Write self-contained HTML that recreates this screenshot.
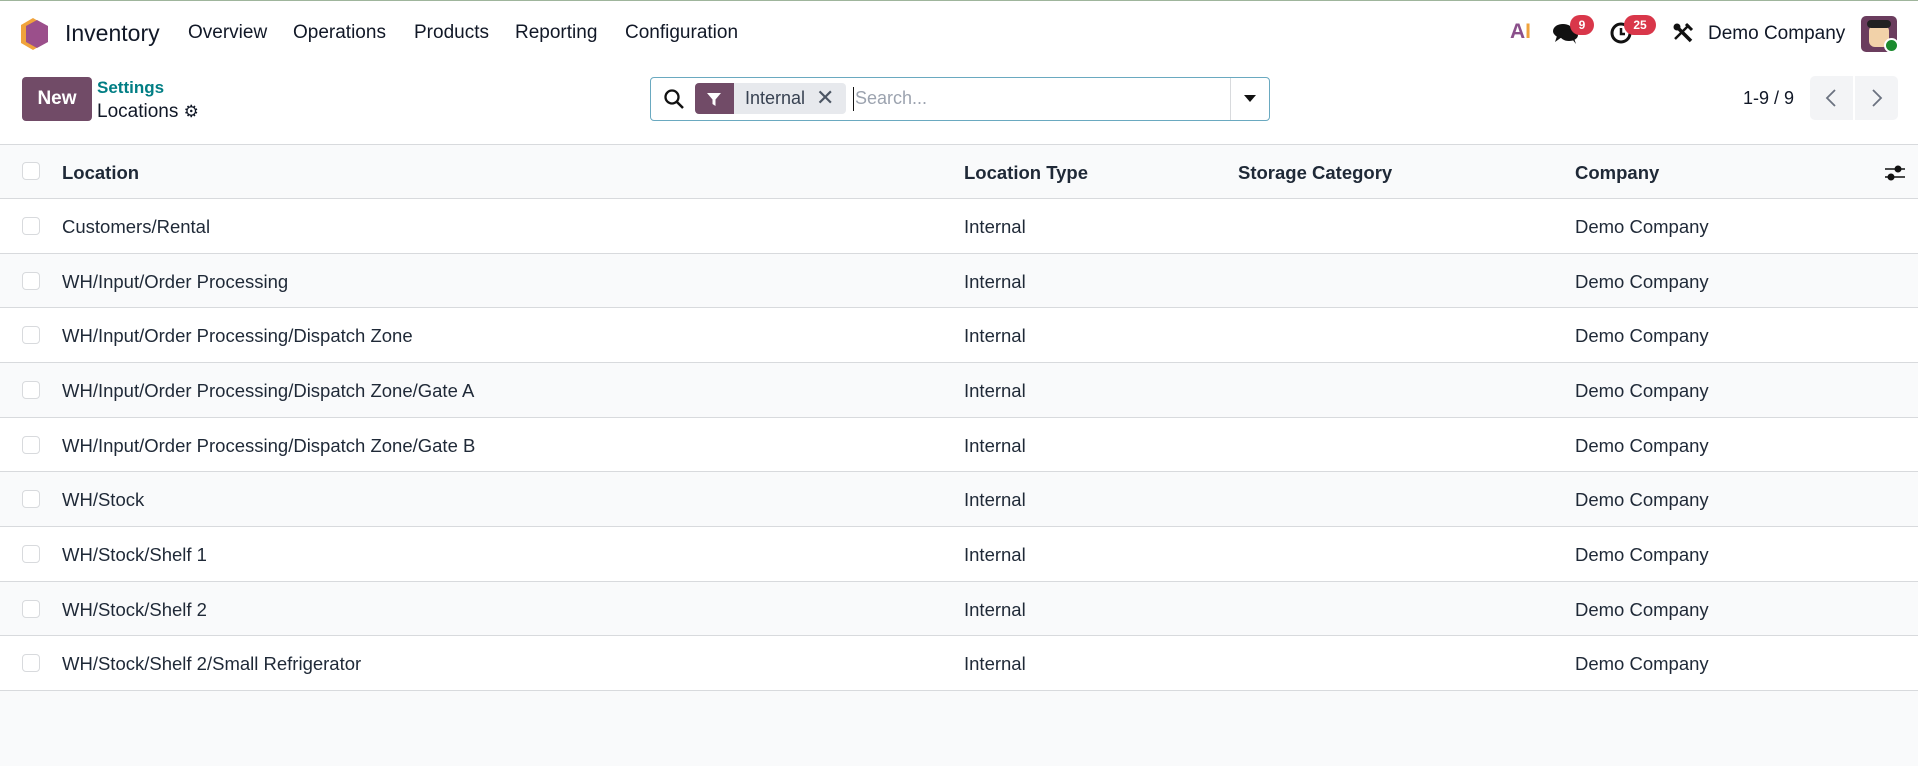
<!DOCTYPE html>
<html><head><meta charset="utf-8"><style>
*{box-sizing:border-box;margin:0;padding:0}
body{width:1918px;height:766px;background:#f9fafb;font-family:"Liberation Sans",sans-serif;color:#1f2937;position:relative;overflow:hidden}
.top{position:absolute;left:0;top:0;width:1918px;height:144px;background:#fff;border-top:1px solid #9fb59c}
.a{position:absolute;white-space:nowrap}
.nav{font-size:19px;top:21px;color:#111827}
.row{position:absolute;left:0;width:1918px;height:54.67px;border-bottom:1px solid #d8dadd;font-size:18.5px}
.row span{position:absolute;top:17px}
.cb{position:absolute;left:22px;top:18px;width:18px;height:18px;border:1px solid #d8dadd;border-radius:4px;background:#fff}
.badge{position:absolute;background:#d9374a;color:#fff;font-size:12px;font-weight:bold;border-radius:10px;height:20px;line-height:20px;text-align:center}
</style></head><body>
<div class="top">
<svg class="a" style="left:20px;top:16px" width="30" height="34" viewBox="0 0 30 34"><polygon points="13,1 25,8 25,26 13,33 1,26 1,8" fill="#f0a33c"/><polygon points="17,3 28,9 28,25 17,31 6,25 6,9" fill="#9b4f8b"/></svg>
<div class="a" style="left:65px;top:19px;font-size:23px;color:#111827">Inventory</div>
<div class="a nav" style="left:188px">Overview</div>
<div class="a nav" style="left:293px">Operations</div>
<div class="a nav" style="left:414px">Products</div>
<div class="a nav" style="left:515px">Reporting</div>
<div class="a nav" style="left:625px">Configuration</div>
<div class="a" style="left:1510px;top:19px;font-size:21px;font-weight:bold;color:#8a4f8a">A<span style="color:#f0a33c">I</span></div>
<svg class="a" style="left:1552px;top:20px" width="28" height="24" viewBox="0 0 28 24"><ellipse cx="11" cy="10" rx="10" ry="7" fill="#111"/><ellipse cx="17" cy="14" rx="9" ry="6" fill="#111"/><path d="M5 15 L3 21 L10 16Z M20 18 L24 23 L22 17Z" fill="#111"/></svg>
<div class="badge" style="left:1570px;top:14px;width:24px">9</div>
<svg class="a" style="left:1610px;top:20px" width="24" height="24" viewBox="0 0 24 24"><circle cx="11" cy="12" r="9" fill="none" stroke="#111" stroke-width="3"/><path d="M11 7v6h4" stroke="#111" stroke-width="2.5" fill="none"/></svg>
<div class="badge" style="left:1624px;top:14px;width:32px">25</div>
<svg class="a" style="left:1672px;top:21px" width="22" height="22" viewBox="0 0 22 22"><path d="M5 5 L19 19" stroke="#111" stroke-width="3.5"/><path d="M17 3 L3 17" stroke="#111" stroke-width="2.5"/><circle cx="5" cy="5" r="3.5" fill="#111"/><path d="M14 2 L20 8" stroke="#111" stroke-width="3"/></svg>
<div class="a" style="left:1708px;top:22px;font-size:19px;color:#111827">Demo Company</div>
<div class="a" style="left:1861px;top:15px;width:36px;height:36px;border-radius:5px;background:#6b3d5e"><div style="position:absolute;left:8px;top:9px;width:20px;height:22px;background:#f2d2a9;border-radius:6px"></div><div style="position:absolute;left:6px;top:4px;width:24px;height:8px;background:#222;border-radius:4px"></div></div>
<div class="a" style="left:1884px;top:37px;width:15px;height:15px;border-radius:50%;background:#1a8a2e;border:2px solid #fff"></div>

<div class="a" style="left:22px;top:76px;width:70px;height:44px;background:#714b67;border-radius:4px;color:#fff;font-weight:bold;font-size:19px;text-align:center;line-height:44px">New</div>
<div class="a" style="left:97px;top:77px;font-size:17px;font-weight:bold;color:#017e84">Settings</div>
<div class="a" style="left:97px;top:100px;font-size:19px;color:#111827">Locations <span style="font-size:17px">⚙</span></div>

<div class="a" style="left:650px;top:76px;width:620px;height:44px;border:1px solid #6aa9c0;border-radius:4px;background:#fff"></div>
<svg class="a" style="left:663px;top:87px" width="22" height="22" viewBox="0 0 22 22"><circle cx="9" cy="9" r="6.5" fill="none" stroke="#111" stroke-width="2.3"/><path d="M14 14 L20 20" stroke="#111" stroke-width="2.5"/></svg>
<div class="a" style="left:695px;top:82px;width:151px;height:31px;background:#e7e9ed;border-radius:4px"></div>
<div class="a" style="left:695px;top:82px;width:39px;height:31px;background:#714b67;border-radius:4px 0 0 4px"></div>
<svg class="a" style="left:706px;top:90px" width="16" height="16" viewBox="0 0 16 16"><path d="M1 2 H15 L9.5 8.5 V15 L6.5 13 V8.5Z" fill="#fff"/></svg>
<div class="a" style="left:745px;top:87px;font-size:18px;color:#374151">Internal</div>
<div class="a" style="left:816px;top:84px;font-size:22px;color:#4b5563">✕</div>
<div class="a" style="left:853px;top:86px;width:1px;height:24px;background:#111"></div>
<div class="a" style="left:855px;top:87px;font-size:18px;color:#9ca3af">Search...</div>
<div class="a" style="left:1230px;top:77px;width:1px;height:42px;background:#d8dadd"></div>
<div class="a" style="left:1244px;top:94px;width:0;height:0;border-left:6px solid transparent;border-right:6px solid transparent;border-top:7px solid #111"></div>

<div class="a" style="left:1743px;top:87px;font-size:18px;color:#111827">1-9 / 9</div>
<div class="a" style="left:1810px;top:75px;width:43px;height:44px;background:#f3f4f6;border-radius:5px 0 0 5px"><svg style="position:absolute;left:15px;top:12px" width="12" height="20" viewBox="0 0 12 20"><path d="M10 2 L2 10 L10 18" stroke="#6b7280" stroke-width="1.8" fill="none"/></svg></div>
<div class="a" style="left:1855px;top:75px;width:43px;height:44px;background:#f3f4f6;border-radius:0 5px 5px 0"><svg style="position:absolute;left:16px;top:12px" width="12" height="20" viewBox="0 0 12 20"><path d="M2 2 L10 10 L2 18" stroke="#6b7280" stroke-width="1.8" fill="none"/></svg></div>
</div>

<div class="row" style="top:144px;height:55px;background:#f9fafb;border-top:1px solid #d8dadd;font-weight:bold">
<div class="cb" style="top:17px"></div>
<span style="left:62px">Location</span><span style="left:964px">Location Type</span><span style="left:1238px">Storage Category</span><span style="left:1575px">Company</span>
<svg style="position:absolute;left:1884px;top:20px" width="22" height="16" viewBox="0 0 22 16"><path d="M1 4H21M1 12H21" stroke="#111" stroke-width="1.5"/><circle cx="14" cy="4" r="3.5" fill="#111"/><circle cx="7" cy="12" r="3.5" fill="#111"/></svg>
</div>

<div class="row" style="top:199px;background:#fff"><div class="cb"></div><span style="left:62px">Customers/Rental</span><span style="left:964px">Internal</span><span style="left:1575px">Demo Company</span></div>
<div class="row" style="top:253.67px;background:#f9fafb"><div class="cb"></div><span style="left:62px">WH/Input/Order Processing</span><span style="left:964px">Internal</span><span style="left:1575px">Demo Company</span></div>
<div class="row" style="top:308.33px;background:#fff"><div class="cb"></div><span style="left:62px">WH/Input/Order Processing/Dispatch Zone</span><span style="left:964px">Internal</span><span style="left:1575px">Demo Company</span></div>
<div class="row" style="top:363px;background:#f9fafb"><div class="cb"></div><span style="left:62px">WH/Input/Order Processing/Dispatch Zone/Gate A</span><span style="left:964px">Internal</span><span style="left:1575px">Demo Company</span></div>
<div class="row" style="top:417.67px;background:#fff"><div class="cb"></div><span style="left:62px">WH/Input/Order Processing/Dispatch Zone/Gate B</span><span style="left:964px">Internal</span><span style="left:1575px">Demo Company</span></div>
<div class="row" style="top:472.33px;background:#f9fafb"><div class="cb"></div><span style="left:62px">WH/Stock</span><span style="left:964px">Internal</span><span style="left:1575px">Demo Company</span></div>
<div class="row" style="top:527px;background:#fff"><div class="cb"></div><span style="left:62px">WH/Stock/Shelf 1</span><span style="left:964px">Internal</span><span style="left:1575px">Demo Company</span></div>
<div class="row" style="top:581.67px;background:#f9fafb"><div class="cb"></div><span style="left:62px">WH/Stock/Shelf 2</span><span style="left:964px">Internal</span><span style="left:1575px">Demo Company</span></div>
<div class="row" style="top:636.33px;background:#fff"><div class="cb"></div><span style="left:62px">WH/Stock/Shelf 2/Small Refrigerator</span><span style="left:964px">Internal</span><span style="left:1575px">Demo Company</span></div>
</body></html>
